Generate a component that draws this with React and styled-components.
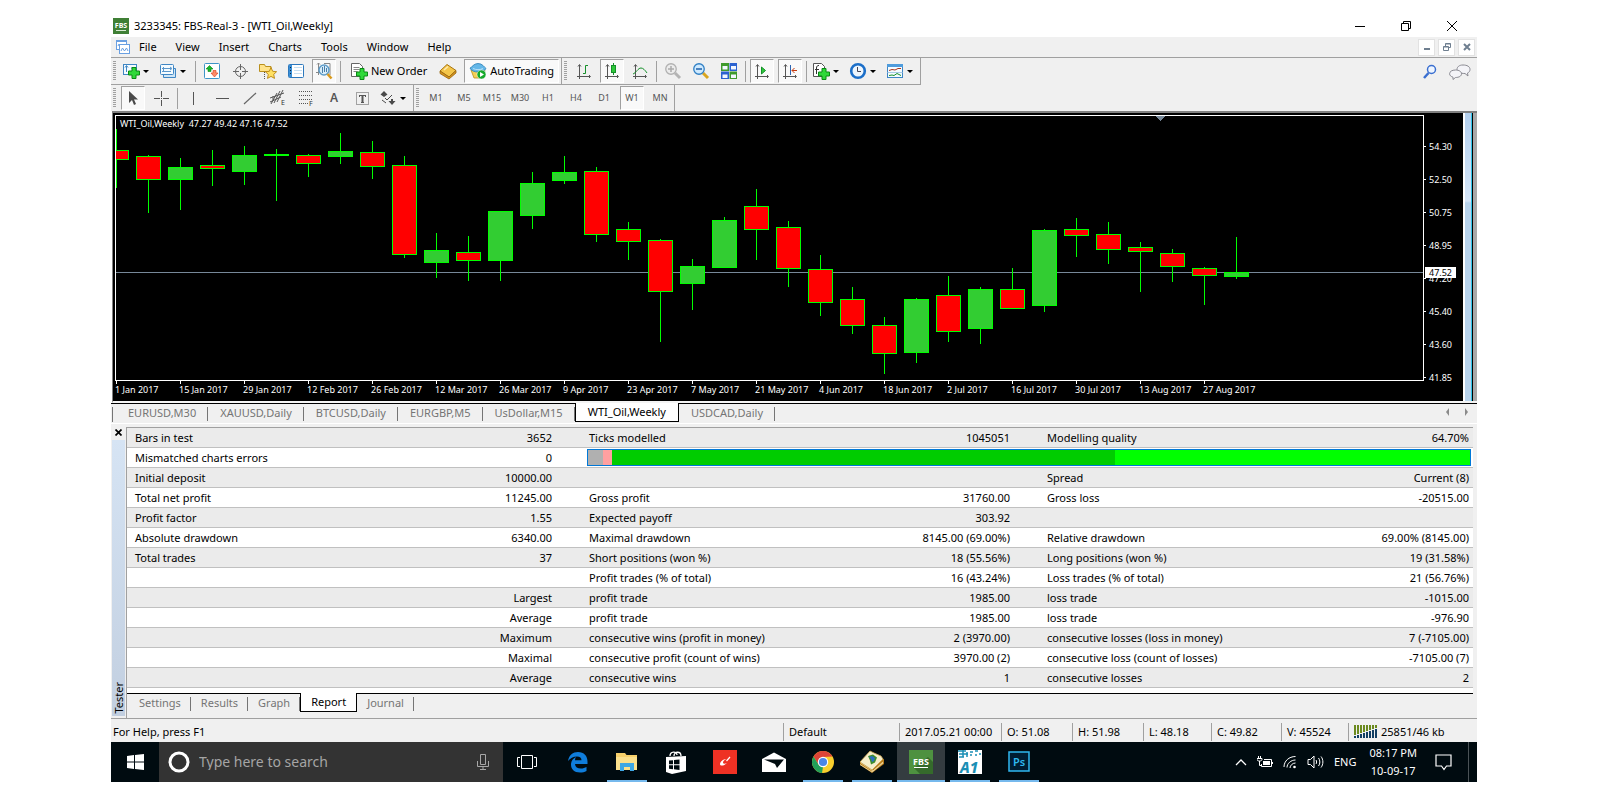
import React, { useState } from 'react';
import styled, { createGlobalStyle } from 'styled-components';

const menus = ['File', 'View', 'Insert', 'Charts', 'Tools', 'Window', 'Help'];
const periods = ['M1', 'M5', 'M15', 'M30', 'H1', 'H4', 'D1', 'W1', 'MN'];
const chartTabs = ['EURUSD,M30', 'XAUUSD,Daily', 'BTCUSD,Daily', 'EURGBP,M5', 'UsDollar,M15', 'WTI_Oil,Weekly', 'USDCAD,Daily'];
const testerTabs = ['Settings', 'Results', 'Graph', 'Report', 'Journal'];
const prices = ['54.30', '52.50', '50.75', '48.95', '47.20', '45.40', '43.60', '41.85'];
const dates = [
  '1 Jan 2017', '15 Jan 2017', '29 Jan 2017', '12 Feb 2017', '26 Feb 2017', '12 Mar 2017',
  '26 Mar 2017', '9 Apr 2017', '23 Apr 2017', '7 May 2017', '21 May 2017', '4 Jun 2017',
  '18 Jun 2017', '2 Jul 2017', '16 Jul 2017', '30 Jul 2017', '13 Aug 2017', '27 Aug 2017',
];

// [rising, wick top, body top, body bottom, wick bottom]
const candles = [
  [0, 13, 34, 44, 72], [0, 39, 40, 64, 97], [1, 42, 51, 64, 94], [0, 34, 49, 53, 70],
  [1, 30, 39, 56, 69], [1, 33, 38, 40, 85], [0, 38, 39, 48, 61], [1, 17, 35, 41, 48],
  [0, 25, 36, 51, 63], [0, 40, 49, 139, 142], [1, 117, 134, 147, 162], [0, 120, 136, 145, 165],
  [1, 95, 95, 145, 165], [1, 56, 67, 100, 113], [1, 40, 56, 65, 68], [0, 51, 55, 119, 126],
  [0, 106, 113, 126, 144], [0, 123, 124, 176, 226], [1, 143, 150, 168, 194], [1, 101, 104, 152, 152],
  [0, 73, 90, 114, 144], [0, 105, 111, 153, 171], [0, 139, 153, 187, 200], [0, 171, 183, 210, 218],
  [0, 201, 209, 238, 258], [1, 182, 183, 237, 247], [0, 160, 179, 216, 226], [1, 171, 173, 213, 228],
  [0, 152, 173, 193, 193], [1, 113, 114, 190, 196], [0, 102, 113, 120, 141], [0, 106, 118, 134, 148],
  [0, 126, 131, 136, 176], [0, 133, 137, 151, 166], [0, 151, 152, 160, 189], [1, 121, 156, 161, 163],
];

const report = [
  ['Bars in test', '3652', 'Ticks modelled', '1045051', 'Modelling quality', '64.70%'],
  ['Mismatched charts errors', '0'],
  ['Initial deposit', '10000.00', '', '', 'Spread', 'Current (8)'],
  ['Total net profit', '11245.00', 'Gross profit', '31760.00', 'Gross loss', '-20515.00'],
  ['Profit factor', '1.55', 'Expected payoff', '303.92', '', ''],
  ['Absolute drawdown', '6340.00', 'Maximal drawdown', '8145.00 (69.00%)', 'Relative drawdown', '69.00% (8145.00)'],
  ['Total trades', '37', 'Short positions (won %)', '18 (55.56%)', 'Long positions (won %)', '19 (31.58%)'],
  ['', '', 'Profit trades (% of total)', '16 (43.24%)', 'Loss trades (% of total)', '21 (56.76%)'],
  ['', 'Largest', 'profit trade', '1985.00', 'loss trade', '-1015.00'],
  ['', 'Average', 'profit trade', '1985.00', 'loss trade', '-976.90'],
  ['', 'Maximum', 'consecutive wins (profit in money)', '2 (3970.00)', 'consecutive losses (loss in money)', '7 (-7105.00)'],
  ['', 'Maximal', 'consecutive profit (count of wins)', '3970.00 (2)', 'consecutive loss (count of losses)', '-7105.00 (7)'],
  ['', 'Average', 'consecutive wins', '1', 'consecutive losses', '2'],
];

const quality = [
  [15, '#b0b0b0'],
  [9, '#ffa0a0'],
  [503, '#00cc00'],
  [355, '#00ff00'],
];

const status = [
  ['Default', 116],
  ['2017.05.21 00:00', 102],
  ['O: 51.08', 71],
  ['H: 51.98', 71],
  ['L: 48.18', 68],
  ['C: 49.82', 70],
  ['V: 45524', 67],
];

function Plus({ x = 6, y = 6 }) {
  return <path transform={`translate(${x} ${y})`} d="M4 .5h4v3.500h3.500v4H8v3.500H4V8H.5V4H4z" fill="#2fd83a" stroke="#0a8a14" />;
}

function Axes({ children }) {
  return (
    <svg width="18" height="18" viewBox="0 0 18 18" fill="none">
      <path d="M4.500 3v14M2 14.500h13M3 4.500l1.500-2 1.500 2M14 13l1.500 1.500L14 16" stroke="#555" />
      {children}
    </svg>
  );
}

function Icon({ name }) {
  switch (name) {
    case 'newChart':
      return (
        <svg width="18" height="18" viewBox="0 0 18 18" fill="none">
          <rect x="1.500" y="2.500" width="13" height="10" fill="#f4fbff" stroke="#3f86c4" />
          <path d="M4.500 4v6M3 5.500l1.500-2 1.500 2M9 6h4" stroke="#3f86c4" />
          <Plus x={6} y={5} />
        </svg>
      );
    case 'profiles':
      return (
        <svg width="18" height="18" viewBox="0 0 18 18" fill="none">
          <path d="M4.500 12.500v3h12v-9h-3" fill="#cfe6f7" stroke="#3f86c4" />
          <rect x="1.500" y="2.500" width="13" height="10" rx="1" fill="#f4fbff" stroke="#3f86c4" />
          <path d="M4.500 5v5M3 6.500h9M3 9.500h9M11 5l2 1.500L11 8" stroke="#5a97cc" />
        </svg>
      );
    case 'market':
      return (
        <svg width="18" height="18" viewBox="0 0 18 18" fill="none">
          <rect x="1.500" y="1.500" width="15" height="15" rx="1" fill="#fff" stroke="#3f94c8" />
          <path d="M3 7l3.500-3.500L10 7H8v2.500H5V7z" fill="#19b52c" stroke="#0a8a14" strokeWidth=".6" />
          <path d="M8 11l3.500 4 3.500-4h-2V8.500h-3V11z" fill="#ff8a66" stroke="#d63a1a" strokeWidth=".6" />
        </svg>
      );
    case 'crosshair':
      return (
        <svg width="18" height="18" viewBox="0 0 18 18" fill="none" stroke="#666">
          <circle cx="9.500" cy="9.500" r="5" />
          <path d="M9.500 2v6M9.500 11v6M2 9.500h6M11 9.500h6" />
        </svg>
      );
    case 'navigator':
      return (
        <svg width="18" height="18" viewBox="0 0 18 18" fill="none">
          <path d="M.5 2.500h5l1 2h5.500v5H.5z" fill="#ffe38a" stroke="#b98f1c" />
          <path d="M5.500 10v7" stroke="#555" strokeDasharray="1 1" />
          <path d="M12 5.500l1.700 3.800 3.900.4-2.900 2.700.8 4-3.500-2-3.500 2 .8-4-2.900-2.700 3.900-.4z" fill="#ffe063" stroke="#b98410" strokeWidth=".9" />
        </svg>
      );
    case 'terminal':
      return (
        <svg width="18" height="18" viewBox="0 0 18 18" fill="none">
          <rect x="1.500" y="2.500" width="15" height="13" rx="1" fill="#fff" stroke="#2d78bd" />
          <path d="M2 3h3v12H2z" fill="#3b8fd6" />
          <path d="M7 5.500h8M7 8.500h8M7 11.500h8" stroke="#c6dff2" />
          <path d="M3 5.500h1M3 8.500h1M3 11.500h1" stroke="#123" />
        </svg>
      );
    case 'tester':
      return (
        <svg width="18" height="18" viewBox="0 0 18 18" fill="none">
          <path d="M3.500 1v12M1 10.500h5M2 2.500L3.500 1 5 2.500M9 1.500h6V13" stroke="#888" />
          <circle cx="9" cy="8" r="5" fill="#d6ecfa" fillOpacity=".9" stroke="#5d9cc9" strokeWidth="1.500" />
          <path d="M7.500 5v6M9.500 4v6M11.500 6v4" stroke="#4a7faa" />
          <path d="M12.500 12l4 4.500" stroke="#d99a1c" strokeWidth="2.500" />
        </svg>
      );
    case 'newOrder':
      return (
        <svg width="18" height="18" viewBox="0 0 18 18" fill="none">
          <path d="M1.500 1.500h8l3 3v10h-11z" fill="#fff" stroke="#666" />
          <path d="M3.500 5.500h6M3.500 7.500h6M3.500 9.500h4" stroke="#888" />
          <Plus x={6} y={6} />
        </svg>
      );
    case 'metaEditor':
      return (
        <svg width="18" height="18" viewBox="0 0 18 18" fill="none">
          <path d="M1 9l7-6.500 9 6-7 6.500z" fill="#f4c64a" stroke="#a87410" />
          <path d="M1 9v2.500l9 5.500 7-6V8.500L10 15z" fill="#d8951e" stroke="#96650c" strokeWidth=".8" />
          <path d="M5 8l4-3.500" stroke="#ffeab0" strokeWidth="1.500" />
        </svg>
      );
    case 'autoTrading':
      return (
        <svg width="18" height="18" viewBox="0 0 18 18" fill="none">
          <path d="M2 8l3 8h8l3-8z" fill="#f3cf55" stroke="#b98f1c" strokeWidth=".8" />
          <path d="M1 6C3 5.500 4.500 1.500 9 1.500S15 5 17 6.500c-1 2.500-5 3.500-8 3.500S2 9 1 6z" fill="#63b7e8" stroke="#2a7db5" strokeWidth=".8" />
          <path d="M4 6.500c3 1.500 7 1.500 10 0" stroke="#b8e0f6" />
          <circle cx="12.500" cy="12.500" r="4.500" fill="#15a82a" stroke="#fff" strokeWidth=".5" />
          <path d="M11 10l4 2.500-4 2.500z" fill="#fff" />
        </svg>
      );
    case 'bars':
      return <Axes><path d="M8 11.500h2.500v-8H13" stroke="#15902a" /></Axes>;
    case 'candles':
      return (
        <Axes>
          <path d="M10.500 1v12" stroke="#15902a" />
          <rect x="8.500" y="3.500" width="4" height="7" fill="#2fc83a" stroke="#15902a" />
        </Axes>
      );
    case 'line':
      return <Axes><path d="M2 12c3-1 5-6 8-6 2 0 4 2 6 5" stroke="#15902a" /></Axes>;
    case 'zoomIn':
    case 'zoomOut': {
      const off = name === 'zoomIn';
      return (
        <svg width="18" height="18" viewBox="0 0 18 18" fill="none">
          <path d="M11 11l5 5" stroke={off ? '#b4b4b4' : '#d9a520'} strokeWidth="3" />
          <circle cx="7" cy="7" r="5.250" fill={off ? '#ececec' : '#cfeaff'} stroke={off ? '#b0b0b0' : '#2f7fc4'} strokeWidth="1.300" />
          <path d={off ? 'M4 7h6M7 4v6' : 'M4 7h6'} stroke={off ? '#aaa' : '#1f5fa8'} strokeWidth="1.500" />
        </svg>
      );
    }
    case 'tiles':
      return (
        <svg width="18" height="18" viewBox="0 0 18 18">
          <path d="M1 1h8v8H1zM9.500 9.500h7.500V17H9.500z" fill="#3f9a2c" />
          <path d="M9.500 1H17v8H9.500zM1 9.500h8V17H1z" fill="#2b62d0" />
          <path d="M2.500 4h5v3.500h-5zM11 4h5v3.500h-5zM2.500 12.500h5V16h-5zM11 12.500h5V16h-5z" fill="#f2f7ff" />
        </svg>
      );
    case 'autoScroll':
      return <Axes><path d="M8.500 5v7l4-3.500z" fill="#2fc83a" stroke="#15902a" /></Axes>;
    case 'shift':
      return (
        <Axes>
          <path d="M9.500 3v10" stroke="#2b62b0" />
          <path d="M16 8.500h-5M13.500 6L11 8.500l2.500 2.500" stroke="#c43a10" />
        </Axes>
      );
    case 'indicators':
      return (
        <svg width="18" height="18" viewBox="0 0 18 18" fill="none">
          <path d="M1.500 1.500h8l3 3v10h-11z" fill="#fff" stroke="#555" />
          <path d="M4.500 12V6c0-2 1-2.500 2.500-2.500M3 7.500h4" stroke="#333" />
          <Plus x={6} y={6} />
        </svg>
      );
    case 'clock':
      return (
        <svg width="18" height="18" viewBox="0 0 18 18" fill="none">
          <circle cx="9" cy="9" r="6.800" fill="#eef6fd" stroke="#1c6fc9" strokeWidth="2.600" />
          <path d="M8.500 5v4.500H12" stroke="#445" />
        </svg>
      );
    case 'templates':
      return (
        <svg width="18" height="18" viewBox="0 0 18 18" fill="none">
          <rect x="1.500" y="2.500" width="15" height="13" fill="#f4fbff" stroke="#3f86c4" />
          <path d="M1 2h16v3H1z" fill="#4f9cdc" />
          <path d="M3 8.500l3-1 3 .5 3-1.500h3" stroke="#a8321a" />
          <path d="M1.500 10.500h15" stroke="#a9cbe6" />
          <path d="M3 13.500l3-.5 2 .5 3-2 4 2" stroke="#15902a" />
        </svg>
      );
    case 'pointer':
      return <svg width="18" height="18" viewBox="0 0 18 18"><path d="M5 2v12l3-3 2 5 2-1-2-4.500h4z" fill="#4a4a4a" /></svg>;
    case 'cross':
      return <svg width="18" height="18" viewBox="0 0 18 18"><path d="M9.500 2v6M9.500 11v6M2 9.500h6M11 9.500h6M9 9.500h1" stroke="#555" /></svg>;
    case 'vline':
      return <svg width="18" height="18" viewBox="0 0 18 18"><path d="M8.500 3v13" stroke="#555" /></svg>;
    case 'hline':
      return <svg width="18" height="18" viewBox="0 0 18 18"><path d="M3 9.500h13" stroke="#555" /></svg>;
    case 'trend':
      return <svg width="18" height="18" viewBox="0 0 18 18"><path d="M3 15L15 4" stroke="#666" strokeWidth="1.200" /></svg>;
    case 'channel':
      return (
        <svg width="18" height="18" viewBox="0 0 18 18">
          <path d="M1 9l14-5M1 13l11-5M2 15L8 4M5 14l6-12M8 13l6-12M4 7v4" stroke="#555" />
          <SmallText x="12" y="16">E</SmallText>
        </svg>
      );
    case 'fibo':
      return (
        <svg width="18" height="18" viewBox="0 0 18 18">
          <path d="M2 2.500h14M2 6.500h14M2 10.500h14M2 14.500h9" stroke="#555" strokeDasharray="1 1" />
          <SmallText x="12" y="17">F</SmallText>
        </svg>
      );
    case 'label':
      return (
        <svg width="18" height="18" viewBox="0 0 18 18">
          <rect x="3.500" y="3.500" width="12" height="12" fill="none" stroke="#555" strokeDasharray="1 1" />
          <path d="M6 6.500h7M6.500 6v2M12.500 6v2M8 13.500h3" stroke="#555" />
          <path d="M9.500 6v8" stroke="#555" strokeWidth="2" />
        </svg>
      );
    case 'arrows':
      return (
        <svg width="18" height="18" viewBox="0 0 18 18" fill="#4a4a4a">
          <path d="M5 2l3.500 3.500L5 8 1.500 5.500zM12 10h2v2h2.500L13 16l-3.500-4H12z" />
          <path d="M6 9l2 2 5-5M3 11l4 3" fill="none" stroke="#4a4a4a" />
        </svg>
      );
    default:
      return null;
  }
}

function Tool({ name, drop, checked }) {
  return (
    <ToolButton type="button" aria-label={name} $checked={checked} $drop={drop}>
      <Icon name={name} />
      {drop && <Caret />}
    </ToolButton>
  );
}

function Candles() {
  return (
    <PlotSvg>
      <path d="M0 156.500h4000" stroke="#778899" />
      {candles.map(([up, high, top, bottom, low], i) => (
        <g key={i} stroke="#00ff00">
          <path d={`M${i * 32 + 0.5} ${high}V${low}`} />
          <rect x={i * 32 - 11.5} y={top + 0.5} width="24" height={bottom - top - 1} fill={up ? '#32cd32' : '#ff0000'} />
        </g>
      ))}
      <path d="M1039 0h10l-5 5z" fill="#778899" />
    </PlotSvg>
  );
}

function AppIcon({ name }) {
  switch (name) {
    case 'Edge':
      return (
        <svg width="22" height="22" viewBox="0 0 22 22">
          <path d="M1 10C2 4 6 1 11 1c6 0 9.500 4 9.500 9.500v2.500H8c.2 3 2.500 4.500 6 4.500 2 0 4-.6 5.500-1.500v4c-2 1-4 1.500-6.500 1.500-6 0-9-3.500-9-8 0-3.500 2-6 5-7.500C8.300 7 8 8 8 9.300h6.500C14.500 7 13 5.500 10 5.500 6.500 5.500 3 7.500 1 10z" fill="#0f7ddb" />
        </svg>
      );
    case 'File Explorer':
      return (
        <svg width="24" height="24" viewBox="0 0 24 24">
          <path d="M1 3h9l1.500 2H22v15H1z" fill="#f6d06b" />
          <path d="M1 7h21v13H1z" fill="#fbe08c" />
          <path d="M5 13h14v8h-4v-4h-6v4H5z" fill="#3ea7e4" />
        </svg>
      );
    case 'Store':
      return (
        <svg width="24" height="24" viewBox="0 0 24 24" fill="none">
          <path d="M6 6C6 1 13 1 13 5M10 6c0-5 7-5 7 0" stroke="#fff" strokeWidth="1.300" />
          <path d="M2 7l20-1v15l-14 3-6-2z" fill="#fff" />
          <path d="M5 10.500l4-.3v4H5zM10 10l5.500-.4v4.600H10zM5 15.200h4v4l-4-.5zM10 15.200h5.500v4.700l-5.500-.6z" fill="#000b10" />
        </svg>
      );
    case 'Reader':
      return (
        <svg width="24" height="24" viewBox="0 0 24 24">
          <path d="M0 0h24v24H0z" fill="#ee3124" />
          <path d="M13.500 9C10 9 7 12 7 14c0 2.500 4 2 7-1-2 1-4 1-4-.5S11.500 10 13.500 9z" fill="#fff" />
          <path d="M17 7l-3.500 4" stroke="#fff" strokeWidth="1.200" />
        </svg>
      );
    case 'Mail':
      return (
        <svg width="24" height="24" viewBox="0 0 24 24">
          <path d="M0 9l12-6.500L24 9v13H0z" fill="#fff" />
          <path d="M2 9.500h20L15 18l-2-4z" fill="#000b10" />
        </svg>
      );
    case 'Chrome':
      return (
        <svg width="22" height="22" viewBox="0 0 22 22">
          <circle cx="11" cy="11" r="11" fill="#f9cf2d" />
          <path d="M1.500 5.500A11 11 0 0 1 20.500 5.500L11 6 6.500 13.500z" fill="#dc4437" />
          <path d="M1.500 5.500L6.500 13.500 11 16l-1 6A11 11 0 0 1 1.500 5.500z" fill="#22a05a" />
          <circle cx="11" cy="11" r="5.200" fill="#fff" />
          <circle cx="11" cy="11" r="4.100" fill="#4a86e8" />
        </svg>
      );
    case 'MetaEditor':
      return (
        <svg width="24" height="24" viewBox="0 0 24 24">
          <path d="M0 12v3l12 8 12-9V9z" fill="#b97c1a" />
          <path d="M1 13l12 8 10-9M0 14.500l12 7.500 11-9" fill="none" stroke="#f3e2ae" strokeWidth=".8" />
          <path d="M0 12L10 1l4 2 7 3 2 3-11 11z" fill="#f7eecb" stroke="#c9a350" strokeWidth=".8" />
          <path d="M8 6l5-1.500 4 3-2 5-4 2-1-4z" fill="#3d8c2f" />
          <path d="M9 7l3-1 3 2-1 3-2 1-1-3z" fill="#2b6fc0" />
        </svg>
      );
    case 'FBS':
      return (
        <svg width="24" height="24" viewBox="0 0 24 24">
          <path d="M0 0h24v24H0z" fill="#4e9140" />
          <path d="M19 7l5 5v12H11l-6-6z" fill="#356a2b" />
          <LogoText x="12" y="15" $size={9}>FBS</LogoText>
          <path d="M5 17.500h14" stroke="#fff" />
        </svg>
      );
    case 'A1':
      return (
        <svg width="24" height="24" viewBox="0 0 24 24">
          <path d="M0 0h24v24H0z" fill="#fff" />
          <path d="M0 1h8M1 4h9M1 7h5M5 0v7M9 2v5M12 2h3M17 1h3M12 5h2M17 5h2M21 4h2" stroke="#1b8fb5" strokeWidth="1.500" />
          <AiText x="11" y="23">A1</AiText>
        </svg>
      );
    case 'Photoshop':
      return (
        <svg width="22" height="22" viewBox="0 0 22 22">
          <rect x="1" y="1" width="20" height="19" fill="#001d33" stroke="#2fb8f0" strokeWidth="1.500" />
          <PsText x="11" y="15">Ps</PsText>
        </svg>
      );
    default:
      return null;
  }
}

const apps = [
  ['Edge', ''], ['File Explorer', 'open'], ['Store', ''], ['Reader', ''], ['Mail', ''],
  ['Chrome', 'open'], ['MetaEditor', 'open'], ['FBS', 'active'], ['A1', 'open'], ['Photoshop', 'open'],
];

export default function App() {
  const [chartTab, setChartTab] = useState('WTI_Oil,Weekly');
  const [testerTab, setTesterTab] = useState('Report');
  const [period, setPeriod] = useState('W1');

  return (
    <Page>
      <GlobalStyle />
      <TitleBar>
        <svg width="16" height="16" viewBox="0 0 16 16">
          <path d="M0 0h16v16H0z" fill="#3f7f35" />
          <LogoText x="8" y="10" $size={7}>FBS</LogoText>
          <path d="M3 12.500h10" stroke="#d8ead2" />
        </svg>
        <Title>3233345: FBS-Real-3 - [WTI_Oil,Weekly]</Title>
        <WindowButton type="button" aria-label="Minimize">
          <svg width="12" height="12" viewBox="0 0 12 12"><path d="M1 6.500h10" stroke="#000" /></svg>
        </WindowButton>
        <WindowButton type="button" aria-label="Restore">
          <svg width="12" height="12" viewBox="0 0 12 12" fill="none" stroke="#000"><path d="M1.500 3.500h7v7h-7zM3.500 3.500v-2h7v7h-2" /></svg>
        </WindowButton>
        <WindowButton type="button" aria-label="Close">
          <svg width="12" height="12" viewBox="0 0 12 12"><path d="M1 1l10 10M11 1L1 11" stroke="#000" /></svg>
        </WindowButton>
      </TitleBar>

      <MenuBar>
        <svg width="16" height="16" viewBox="0 0 16 16" fill="none">
          <rect x="1.500" y="1.500" width="10" height="9" fill="#fff" stroke="#6aa0e2" />
          <path d="M3 7l1-2 1 2" stroke="#6aa0e2" />
          <path d="M1 2h11M4 6h11" stroke="#6aa0e2" strokeWidth="2" />
          <rect x="4.500" y="5.500" width="10" height="9" fill="#fff" stroke="#6aa0e2" />
          <path d="M6 12l1.500-3 2 3 2-3 1.500 3" stroke="#6aa0e2" />
        </svg>
        <MenuItems>
          {menus.map((m) => <MenuButton type="button" key={m}>{m}</MenuButton>)}
        </MenuItems>
        <MdiButtons>
          <MdiButton type="button" aria-label="Minimize chart">
            <svg width="8" height="8" viewBox="0 0 8 8"><path d="M1 6h6" stroke="#6f7f90" strokeWidth="2" /></svg>
          </MdiButton>
          <MdiButton type="button" aria-label="Restore chart">
            <svg width="8" height="8" viewBox="0 0 8 8" fill="none" stroke="#6f7f90"><path d="M.5 3.500h5v4h-5zM.5 4h5M2.500 3V.5h5v4H6M2.500 1h5" /></svg>
          </MdiButton>
          <MdiButton type="button" aria-label="Close chart">
            <svg width="8" height="8" viewBox="0 0 8 8"><path d="M1 1l6 6M7 1L1 7" stroke="#6f7f90" strokeWidth="2" /></svg>
          </MdiButton>
        </MdiButtons>
      </MenuBar>

      <ToolRow $height={27}>
        <ToolGroup $underline>
          <Grip />
          <Tool name="newChart" drop />
          <Tool name="profiles" drop />
          <Separator />
          <Tool name="market" />
          <Tool name="crosshair" />
          <Tool name="navigator" />
          <Tool name="terminal" />
          <Tool name="tester" checked />
          <Separator />
          <TextButton type="button"><Icon name="newOrder" />New Order</TextButton>
          <Tool name="metaEditor" />
          <TextButton type="button" $checked><Icon name="autoTrading" />AutoTrading</TextButton>
        </ToolGroup>
        <ToolGroup $underline>
          <Grip />
          <Tool name="bars" />
          <Tool name="candles" checked />
          <Tool name="line" />
          <Separator />
          <Tool name="zoomIn" />
          <Tool name="zoomOut" />
          <Tool name="tiles" />
          <Separator />
          <Tool name="autoScroll" checked />
          <Tool name="shift" checked />
          <Separator />
          <Tool name="indicators" drop />
          <Tool name="clock" drop />
          <Tool name="templates" drop />
        </ToolGroup>
        <ToolEnd>
          <PlainButton type="button" aria-label="Search">
            <svg width="16" height="16" viewBox="0 0 16 16" fill="none">
              <circle cx="9.500" cy="5.500" r="4" fill="#eef5ff" stroke="#3a6fd0" strokeWidth="1.500" />
              <path d="M6.500 9L2 14" stroke="#3a6fd0" strokeWidth="2.500" />
            </svg>
          </PlainButton>
          <PlainButton type="button" aria-label="Chat">
            <svg width="22" height="16" viewBox="0 0 22 16" fill="#f4f4f8" stroke="#8a8a92">
              <path d="M14 1c4 0 7 1.500 7 4.500 0 1.500-1 3-2.500 3.500l.5 3-3-2.500C11 9.500 8 8 8 5.500S10 1 14 1z" />
              <path d="M6.500 6c3.500 0 6 1.500 6 3.800s-2.500 3.700-6 3.700L4 15.500v-2.300C2 12.500.6 11.500.6 9.800.6 7.500 3 6 6.500 6z" />
            </svg>
          </PlainButton>
        </ToolEnd>
      </ToolRow>

      <ToolRow $height={26}>
        <ToolGroup>
          <Grip />
          <Tool name="pointer" checked />
          <Tool name="cross" />
          <Separator />
          <Tool name="vline" />
          <Tool name="hline" />
          <Tool name="trend" />
          <Tool name="channel" />
          <Tool name="fibo" />
          <LetterButton type="button">A</LetterButton>
          <Tool name="label" />
          <Tool name="arrows" drop />
        </ToolGroup>
        <ToolGroup>
          <Grip />
          {periods.map((p) => (
            <PeriodButton type="button" key={p} $checked={p === period} onClick={() => setPeriod(p)}>{p}</PeriodButton>
          ))}
        </ToolGroup>
      </ToolRow>

      <ChartWindow>
        <ChartArea>
          <PlotColumn>
            <Plot>
              <Candles />
              <ChartTitle>{'WTI_Oil,Weekly  47.27 49.42 47.16 47.52'}</ChartTitle>
            </Plot>
            <DateAxis>
              {dates.map((d) => <DateLabel key={d}>{d}</DateLabel>)}
            </DateAxis>
          </PlotColumn>
          <PriceAxis>
            {prices.map((p) => <PriceLabel key={p}>{p}</PriceLabel>)}
            <PriceTag>47.52</PriceTag>
          </PriceAxis>
        </ChartArea>
        <ChartEdge />
      </ChartWindow>

      <ChartTabBar>
        <TabList>
          {chartTabs.map((t) => (
            <Tab type="button" key={t} $active={t === chartTab} onClick={() => setChartTab(t)}>{t}</Tab>
          ))}
        </TabList>
        <TabArrows>
          <svg width="22" height="8" viewBox="0 0 22 8" fill="#8a8a8a"><path d="M3 0v8L0 4zM19 0v8l3-4z" /></svg>
        </TabArrows>
      </ChartTabBar>

      <TesterPanel>
        <TesterSide>
          <CloseButton type="button" aria-label="Close tester">
            <svg width="7" height="7" viewBox="0 0 7 7"><path d="M.5 .5l6 6M6.500 .5l-6 6" stroke="#000" strokeWidth="1.700" /></svg>
          </CloseButton>
          <TesterName><span>Tester</span></TesterName>
        </TesterSide>
        <TesterBody>
          <Report>
            <colgroup>
              <Col $width={225} />
              <Col />
              <Col $width={258} />
              <Col />
              <Col $width={263} />
              <Col />
            </colgroup>
            <tbody>
              {report.map((row, i) => (
                <tr key={i}>
                  {row.map((cell, j) => (j % 2 ? <ValueCell key={j}>{cell}</ValueCell> : <LabelCell key={j}>{cell}</LabelCell>))}
                  {row.length === 2 && (
                    <QualityCell colSpan="4">
                      <QualityBar>
                        {quality.map(([share, color]) => <Segment key={color} $share={share} $color={color} />)}
                      </QualityBar>
                    </QualityCell>
                  )}
                </tr>
              ))}
            </tbody>
          </Report>
          <TesterTabs>
            {testerTabs.map((t) => (
              <Tab type="button" key={t} $active={t === testerTab} $tight onClick={() => setTesterTab(t)}>{t}</Tab>
            ))}
          </TesterTabs>
        </TesterBody>
      </TesterPanel>

      <StatusBar>
        <StatusHelp>For Help, press F1</StatusHelp>
        {status.map(([text, width]) => <StatusCell key={text} $width={width}>{text}</StatusCell>)}
        <StatusCell $width={129}>
          <svg width="24" height="14" viewBox="0 0 24 14">
            {[0, 1, 2, 3, 4, 5, 6, 7].map((i) => (
              <g key={i}>
                <path d={`M${i * 3} 0h2v${10 - i}h-2z`} fill="#6b8a1e" />
                <path d={`M${i * 3} ${11 - i}h2V13h-2z`} fill="#123f63" />
              </g>
            ))}
          </svg>
          25851/46 kb
        </StatusCell>
      </StatusBar>

      <TaskBar>
        <TaskButton type="button" aria-label="Start">
          <svg width="17" height="16" viewBox="0 0 17 16" fill="#fff"><path d="M0 2l7-1v6.500H0zM8 .9L17 0v7.500H8zM0 8.500h7V15l-7-1zM8 8.500h9V16l-9-.9z" /></svg>
        </TaskButton>
        <SearchBox>
          <svg width="22" height="22" viewBox="0 0 22 22"><circle cx="11" cy="11" r="9" fill="none" stroke="#fff" strokeWidth="3" /></svg>
          <SearchInput type="text" aria-label="Search" placeholder="Type here to search" />
          <svg width="12" height="18" viewBox="0 0 12 18" fill="none" stroke="#a8a8a8"><path d="M3.500 1.500h5v10h-5zM.5 8v5.500h11V8M6 13.500v3M3 16.500h6" /></svg>
        </SearchBox>
        <TaskButton type="button" aria-label="Task view">
          <svg width="20" height="14" viewBox="0 0 20 14" fill="none" stroke="#fff"><path d="M4.500 .5h11v13h-11zM3 2.500H.5v9H3M17 2.500h2.500v9H17" /></svg>
        </TaskButton>
        <AppList>
          {apps.map(([name, state]) => (
            <TaskButton type="button" key={name} aria-label={name} $state={state}><AppIcon name={name} /></TaskButton>
          ))}
        </AppList>
        <Tray>
          <svg width="12" height="8" viewBox="0 0 12 8" fill="none" stroke="#fff" strokeWidth="1.300"><path d="M1 7l5-5 5 5" /></svg>
          <svg width="16" height="12" viewBox="0 0 16 12" fill="none" stroke="#fff">
            <path d="M0 2.500h5v1c0 2-5 2-5 0zM1.500 2V0M3.500 2V0M2.500 5v4.500H5M7 3.500h7.500v7H4.500V8M15.500 6v2" />
            <path d="M6 5h7v4H6z" fill="#fff" stroke="none" />
          </svg>
          <svg width="14" height="14" viewBox="0 0 14 14" fill="none" stroke="#fff">
            <path d="M1 12C1 6 6 1.500 12.500 1.500M4 12.500c0-4 4-7.500 8.500-7.500M7 13c0-2.500 2.500-5 5.500-5" />
            <circle cx="11.500" cy="12" r="1.300" fill="#fff" stroke="none" />
          </svg>
          <svg width="17" height="14" viewBox="0 0 17 14" fill="none" stroke="#fff">
            <path d="M1 4.500h2.500L7 1v12L3.500 9.500H1zM9 5c.8 1 .8 3 0 4M11.500 3c1.800 2 1.800 6 0 8M14 1.500c2.500 3 2.500 8 0 11" />
          </svg>
          <span>ENG</span>
        </Tray>
        <Clock>
          <span>08:17 PM</span>
          <span>10-09-17</span>
        </Clock>
        <TaskButton type="button" aria-label="Notifications">
          <svg width="18" height="18" viewBox="0 0 18 18" fill="none" stroke="#fff" strokeWidth="1.200"><path d="M1 2h15v11h-4.500L9 16.500 6.500 13H1z" /></svg>
        </TaskButton>
        <ShowDesktop type="button" aria-label="Show desktop" />
      </TaskBar>
    </Page>
  );
}

const GlobalStyle = createGlobalStyle`
  * {
    box-sizing: border-box;
  }
  body {
    margin: 0;
    background: #fff;
    font-family: 'Noto Sans', 'Open Sans', sans-serif;
    font-size: 11px;
    line-height: 16px;
    color: #000;
  }
  button, input {
    font: inherit;
    color: inherit;
  }
  svg {
    display: block;
    flex: none;
  }
`;

const PlainButton = styled.button`
  display: flex;
  align-items: center;
  justify-content: center;
  padding: 0;
  border: 0;
  background: none;
  white-space: nowrap;
`;

const Page = styled.main`
  display: flex;
  flex-direction: column;
  padding: 16px 123px 18px 111px;
`;

const TitleBar = styled.header`
  display: flex;
  align-items: center;
  height: 21px;
  padding: 0 2px 2px;
`;

const Title = styled.h1`
  flex: 1;
  margin: 0;
  padding-left: 5px;
  font-size: 11px;
  font-weight: 400;
`;

const WindowButton = styled(PlainButton)`
  width: 46px;
  height: 16px;
`;

const MenuBar = styled.nav`
  display: flex;
  align-items: center;
  height: 21px;
  padding: 0 2px 0 4px;
  background: #f0f0f0;
  border-bottom: 1px solid #a0a0a0;
`;

const MenuItems = styled.div`
  display: flex;
  flex: 1;
  gap: 19px;
  padding-left: 8px;
`;

const MenuButton = styled(PlainButton)`
  height: 20px;
`;

const MdiButtons = styled.div`
  display: flex;
  gap: 3px;
`;

const MdiButton = styled(PlainButton)`
  width: 17px;
  height: 17px;
  background: #fff;
  border: 1px solid #e2e2e2;
`;

const ToolRow = styled.div`
  display: flex;
  height: ${({ $height }) => $height}px;
  background: #f0f0f0;
`;

const ToolGroup = styled.div`
  display: flex;
  align-items: center;
  border-right: 1px solid #a0a0a0;
  border-bottom: ${({ $underline }) => ($underline ? '1px solid #a0a0a0' : '0')};
`;

const ToolEnd = styled.div`
  display: flex;
  gap: 11px;
  margin-left: auto;
  padding: 0 6px 0 0;
`;

const Grip = styled.span`
  width: 3px;
  height: 20px;
  margin: 0 3px 0 2px;
  background: repeating-linear-gradient(#a0a0a0 0 1px, #f0f0f0 1px 2px);
`;

const Separator = styled.span`
  width: 1px;
  height: 21px;
  margin: 0 2px;
  background: #a0a0a0;
`;

const checkedBox = ({ $checked }) =>
  $checked ? 'background: #f9f9f9; border-color: #a0a0a0 #fff #fff #a0a0a0;' : '';

const ToolButton = styled(PlainButton)`
  justify-content: ${({ $drop }) => ($drop ? 'flex-start' : 'center')};
  gap: 3px;
  width: ${({ $drop }) => ($drop ? '33px' : '24px')};
  height: 24px;
  margin: 0 2px;
  border: 1px solid transparent;
  ${checkedBox}
`;

const TextButton = styled(PlainButton)`
  gap: 3px;
  height: 24px;
  margin: 0 2px;
  padding: 0 4px;
  border: 1px solid transparent;
  ${checkedBox}
`;

const LetterButton = styled(ToolButton)`
  font-size: 12px;
  font-weight: 600;
  color: #555;
`;

const PeriodButton = styled(ToolButton)`
  font-size: 9px;
  color: #555;
`;

const Caret = styled.span`
  border: 3px solid transparent;
  border-top-color: #000;
  border-bottom: 0;
`;

const ChartWindow = styled.section`
  display: flex;
  margin-left: 1px;
  border-left: 1px solid #808080;
  border-top: 2px solid #808080;
  border-bottom: 2px solid #f4f4f4;
`;

const ChartArea = styled.div`
  display: flex;
  flex: 1;
  min-width: 0;
  padding: 2px 0 0 2px;
  background: #000;
  color: #fff;
  font-size: 9px;
  line-height: 12px;
`;

const PlotColumn = styled.div`
  flex: 1;
  min-width: 0;
`;

const Plot = styled.div`
  position: relative;
  height: 266px;
  border: 1px solid #fff;
`;

const PlotSvg = styled.svg`
  width: 100%;
  height: 100%;
  shape-rendering: crispEdges;
`;

const ChartTitle = styled.span`
  position: absolute;
  top: 2px;
  left: 4px;
  white-space: pre;
`;

const DateAxis = styled.div`
  display: flex;
  height: 20px;
  overflow: hidden;
`;

const DateLabel = styled.span`
  flex: none;
  width: 64px;

  &::before {
    content: '';
    display: block;
    width: 1px;
    height: 3px;
    margin-left: 1px;
    background: #fff;
  }
`;

const PriceAxis = styled.div`
  position: relative;
  width: 39px;
  height: 286px;
  padding-top: 15px;
`;

const PriceLabel = styled.div`
  display: flex;
  align-items: center;
  gap: 3px;
  height: 33px;

  &::before {
    content: '';
    width: 2px;
    height: 1px;
    background: #fff;
  }

  /* the axis ends before the last slot does */
  &:nth-child(8) {
    margin-bottom: -8px;
  }
`;

const PriceTag = styled.span`
  position: absolute;
  top: 152px;
  left: 1px;
  width: 31px;
  height: 11px;
  padding-left: 4px;
  background: #fff;
  color: #000;
  line-height: 11px;
`;

const ChartEdge = styled.div`
  width: 14px;
  border-left: 2px solid #fff;
  background:
    linear-gradient(90deg, transparent 0 6px, #2fc4e8 6px 7px, #000 7px 8px, #a9a9a9 8px),
    linear-gradient(#b4d0ee, #d6e6f8 88px, #b8d3ec 90px);
`;

const ChartTabBar = styled.div`
  display: flex;
  height: 21px;
  border-top: 1px solid #000;
  border-bottom: 1px solid #fff;
  background: #f0f0f0;
`;

const TabList = styled.div`
  display: flex;
  align-items: flex-start;
  flex: 1;
  margin-left: 1px;
  padding-left: 4px;
  background: linear-gradient(#757575, #757575) 0 3px / 1px 15px no-repeat;
`;

const Tab = styled(PlainButton)`
  position: relative;
  height: ${({ $active }) => ($active ? '19px' : '18px')};
  margin-top: ${({ $active }) => ($active ? '-1px' : '0')};
  padding: 0 ${({ $tight }) => ($tight ? '10px' : '12px')};
  border: solid #000;
  border-width: ${({ $active }) => ($active ? '0 1px 1px' : '0')};
  background: ${({ $active }) => ($active ? '#fff' : 'none')};
  color: ${({ $active }) => ($active ? '#000' : '#757575')};

  /* short divider after every idle tab */
  &::after {
    content: '';
    display: ${({ $active }) => ($active ? 'none' : 'block')};
    position: absolute;
    right: 0;
    top: 3px;
    width: 1px;
    height: 14px;
    background: #757575;
  }
`;

const TabArrows = styled.div`
  display: flex;
  align-items: center;
  padding: 0 9px 3px 0;
`;

const TesterPanel = styled.section`
  display: flex;
  padding-top: 3px;
  background: #f0f0f0;
  border-bottom: 1px solid #a0a0a0;
`;

const TesterSide = styled.aside`
  display: flex;
  flex-direction: column;
  width: 15px;
  padding: 0 1px 2px;
`;

const CloseButton = styled(PlainButton)`
  height: 13px;
  padding-bottom: 3px;
`;

const TesterName = styled.div`
  display: flex;
  align-items: flex-end;
  flex: 1;
  background: linear-gradient(#d6e4f4, #c2cfe0);

  span {
    writing-mode: vertical-rl;
    transform: rotate(180deg);
    line-height: 13px;
    padding-top: 2px;
  }
`;

const TesterBody = styled.div`
  flex: 1;
  min-width: 0;
  margin-right: 4px;
  border-top: 1px solid #a0a0a0;
  border-left: 1px solid #a0a0a0;
  background: #fff;
`;

const Report = styled.table`
  width: 100%;
  margin-bottom: 5px;
  table-layout: fixed;
  border-collapse: separate;
  border-spacing: 0;

  tr:nth-child(odd) {
    background: #ebebeb;
  }
`;

const Col = styled.col`
  width: ${({ $width }) => ($width ? `${$width}px` : 'auto')};
`;

const Cell = styled.td`
  height: 20px;
  padding: 0;
  border-bottom: 1px solid #c0c0c0;
  white-space: nowrap;
`;

const LabelCell = styled(Cell)`
  padding-left: 37px;

  &:first-child {
    padding-left: 8px;
  }
`;

const ValueCell = styled(Cell)`
  text-align: right;

  &:last-child {
    padding-right: 4px;
  }
`;

const QualityCell = styled(Cell)`
  padding: 0 2px 0 35px;
`;

const QualityBar = styled.div`
  display: flex;
  height: 17px;
  border: 1px solid #0078d7;
`;

const Segment = styled.span`
  flex: ${({ $share }) => $share};
  background: ${({ $color }) => $color};
`;

const TesterTabs = styled.div`
  display: flex;
  align-items: flex-start;
  height: 25px;
  padding-left: 2px;
  border-top: 1px solid #000;
  background: #f0f0f0;
`;

const StatusBar = styled.footer`
  display: flex;
  height: 23px;
  padding-top: 4px;
  background: #f0f0f0;
`;

const StatusHelp = styled.span`
  flex: 1;
  padding: 1px 0 0 2px;
`;

const StatusCell = styled.span`
  display: flex;
  align-items: center;
  gap: 3px;
  width: ${({ $width }) => $width}px;
  height: 18px;
  padding-left: 5px;
  border-left: 1px solid #a0a0a0;
  white-space: nowrap;
`;

const TaskBar = styled.footer`
  display: flex;
  height: 40px;
  background: #000b10;
  color: #fff;
`;

const lineWidth = { open: '40px', active: '48px' };

const TaskButton = styled(PlainButton)`
  position: relative;
  width: 48px;
  background: ${({ $state }) => ($state === 'active' ? '#343c40' : 'none')};

  &::after {
    content: '';
    position: absolute;
    bottom: 0;
    width: ${({ $state }) => lineWidth[$state] || 0};
    height: 2px;
    background: #76b9ed;
  }
`;

const SearchBox = styled.div`
  display: flex;
  align-items: center;
  width: 344px;
  padding: 0 14px 0 9px;
  background: #333;
`;

const SearchInput = styled.input`
  flex: 1;
  min-width: 0;
  padding: 0 9px;
  border: 0;
  outline: 0;
  background: none;
  font-size: 14px;

  &::placeholder {
    color: #a5a5a5;
    opacity: 1;
  }
`;

const AppList = styled.div`
  display: flex;
  flex: 1;
  gap: 1px;
  padding-left: 3px;
`;

const Tray = styled.div`
  display: flex;
  align-items: center;
  gap: 10px;
  padding-right: 13px;
`;

const Clock = styled.div`
  display: flex;
  flex-direction: column;
  justify-content: center;
  align-items: center;
  gap: 2px;
  padding-right: 3px;
`;

const ShowDesktop = styled(PlainButton)`
  width: 9px;
  border-left: 1px solid #4a5256;
`;

const SmallText = styled.text`
  font-size: 7px;
  line-height: 7px;
  fill: #333;
`;

const LogoText = styled.text`
  font-size: ${({ $size }) => $size}px;
  font-weight: 700;
  text-anchor: middle;
  fill: #fff;
`;

const AiText = styled.text`
  font-size: 15px;
  font-weight: 800;
  font-style: italic;
  text-anchor: middle;
  fill: #1b8fb5;
`;

const PsText = styled.text`
  font-size: 11px;
  font-weight: 600;
  text-anchor: middle;
  fill: #2fb8f0;
`;
